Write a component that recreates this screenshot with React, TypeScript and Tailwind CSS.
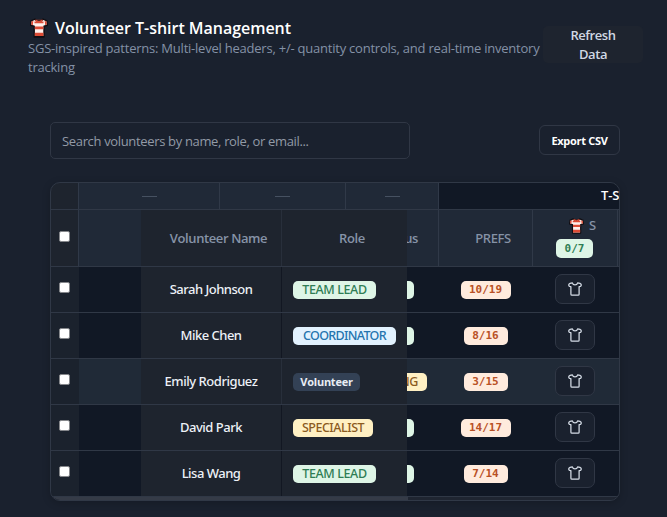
import React from 'react';

const SANS = "font-['Open_Sans','Noto_Sans',sans-serif]";
const MONO = "font-['DejaVu_Sans_Mono',monospace]";

function StripedShirt({ className }: { className: string }) {
  return (
    <svg viewBox="0 0 18 18" preserveAspectRatio="none" className={className}>
      <path d="M5 1 L1 2.6 L.6 6.5 L4.2 7.4 V17 H14 V7.4 L17.4 6.5 L17 2.6 L13 1 C11.5 3.6 6.5 3.6 5 1Z" fill="#fff1ed" stroke="#100d12" strokeWidth="1.4" strokeLinejoin="round" />
      <path d="M4.8 7.6h8.6v2.5H4.8z M4.8 13.3h8.6v3H4.8z M4.5 3.2h9v1.5h-9z" fill="#dc4b35" />
      <path d="M1.3 3.3l2-.8-.5 4-1.5-.4z M16.7 3.3l-2-.8.5 4 1.5-.4z M5 1.5C6.5 4.8 11.5 4.8 13 1.5" fill="#dc4b35" />
      <path d="M6.8 1.5C7.5 2.7 10.5 2.7 11.2 1.5" fill="#17151b" />
    </svg>
  );
}

function ShirtOutline() {
  return (
    <svg viewBox="0 0 14 14" className="h-[14px] w-[14px]" fill="none" stroke="#d5dce6" strokeWidth="1.25" strokeLinejoin="round" strokeLinecap="round">
      <path d="M4.4 .8 L2 1.3 Q.6 1.8 .7 3.2 Q1 4.9 2.9 4.6 V12.2 Q2.9 13.2 3.9 13.2 H10.1 Q11.1 13.2 11.1 12.2 V4.6 Q13 4.9 13.3 3.2 Q13.4 1.8 12 1.3 L9.6 .8 Q9.1 2.9 7 2.9 Q4.9 2.9 4.4 .8Z" />
    </svg>
  );
}

function Checkbox() {
  return <span className="block h-[11px] w-[11px] rounded-[2px] border border-[#85878b] bg-white" />;
}

const GREEN = 'bg-[#def5e6] text-[#2f7d54]';
const rows = [
  { name: 'Sarah Johnson', ns: 'tracking-[-0.5px]', role: 'TEAM LEAD', tone: `w-[83px] tracking-[-0.4px] ${GREEN}`, prefs: '10/19', pending: false },
  { name: 'Mike Chen', ns: 'tracking-[-0.5px]', role: 'COORDINATOR', tone: 'w-[103px] tracking-[-0.68px] bg-[#e2f2fe] text-[#2474ae]', prefs: '8/16', pending: false },
  { name: 'Emily Rodriguez', ns: 'tracking-[-0.46px]', role: 'Volunteer', tone: 'w-[67px] tracking-[-0.25px] bg-[#334155] text-[#e8edf4]', prefs: '3/15', pending: true },
  { name: 'David Park', ns: 'tracking-[-0.5px]', role: 'SPECIALIST', tone: 'w-[80px] tracking-[-0.48px] bg-[#fff0c3] text-[#8b5a1e]', prefs: '14/17', pending: false },
  { name: 'Lisa Wang', ns: 'tracking-[-0.5px]', role: 'TEAM LEAD', tone: `w-[83px] tracking-[-0.4px] ${GREEN}`, prefs: '7/14', pending: false },
];

function TopCell({ width }: { width: string }) {
  return (
    <div className={`flex shrink-0 items-center justify-center border-r border-[#303948] bg-[#202937] ${width}`}>
      <span className="h-px w-[15px] bg-[#465161]" />
    </div>
  );
}

export default function App() {
  return (
    <main className={`h-[517px] w-[667px] overflow-hidden bg-[#1a212e] text-white ${SANS}`}>
      <header className="flex h-[122px] pl-7 pt-[17px]">
        <div className="w-[515px] shrink-0">
          <h1 className="flex h-[21px] items-center text-[16px] font-semibold">
            <StripedShirt className="ml-[2px] mr-[7px] h-[20px] w-[18px]" />
            <span className="whitespace-nowrap tracking-[-0.03px]">Volunteer T-shirt Management</span>
          </h1>
          <p className="mt-px whitespace-nowrap text-[13px] leading-[19px] tracking-[-0.225px] text-[#8491a6]">
            SGS-inspired patterns: Multi-level headers, +/- quantity controls, and real-time inventory
            <br />
            tracking
          </p>
        </div>
        <button className="mt-[9px] h-[37px] w-[100px] rounded-[5px] bg-[#1e242f] text-[13px] font-semibold leading-[19px] tracking-[-0.45px] text-[#d0d8e4]">
          Refresh
          <br />
          Data
        </button>
      </header>

      <div className="ml-[50px] flex h-[60px] w-[570px] items-start justify-between">
        <input
          placeholder="Search volunteers by name, role, or email..."
          className="h-[37px] w-[360px] rounded-[5px] border border-[#303745] bg-[#1a212e] pl-[11px] text-[13px] tracking-[-0.34px] placeholder:text-[#929aa6]"
        />
        <button className="mt-[3px] h-[30px] w-[81px] whitespace-nowrap rounded-[6px] border border-[#303745] pt-[2px] text-[11px] font-bold tracking-[-0.3px]">Export CSV</button>
      </div>

      <section className="ml-[50px] h-[319px] w-[570px] overflow-hidden rounded-[10px] border border-[#303846] bg-[#1e242e] shadow-[0_2px_8px_rgba(0,0,0,0.2)]">
        <div className="flex h-[27px] border-b border-[#303846]">
          <div className="w-[28px] shrink-0 border-r border-[#303948]" />
          <TopCell width="w-[141px]" />
          <TopCell width="w-[126px]" />
          <TopCell width="w-[93px]" />
          <div className="flex-1 overflow-hidden whitespace-nowrap bg-[#111825] pl-[162px] text-[13px] font-semibold leading-[25px] tracking-[-0.2px]">T-Shirts</div>
        </div>
        <div className="flex h-[57px] border-b border-[#303846] text-[13px] font-semibold tracking-[-0.4px] text-[#8693a7]">
          <div className="flex w-[28px] shrink-0 items-center border-r border-[#303948] pb-[3px] pl-[8px]"><Checkbox /></div>
          <div className="w-[62px] shrink-0 bg-[#202937]" />
          <div className="flex w-[141px] shrink-0 items-center justify-center whitespace-nowrap border-r border-[#282f3b] pl-[15px] pt-[2px]">Volunteer Name</div>
          <div className="flex w-[125px] shrink-0 items-center justify-center pl-[15px] pt-[2px]">Role</div>
          <div className="flex w-[32px] shrink-0 items-center justify-end overflow-hidden border-r border-[#303948] bg-[#202937] pr-[20px] pt-[2px]">Status</div>
          <div className="flex w-[94px] shrink-0 items-center justify-center border-r border-[#303948] bg-[#202937] pl-[15px] pt-[2px] font-['Noto_Sans',sans-serif] text-[13px] font-medium">PREFS</div>
          <div className="w-[85px] shrink-0 border-r border-[#303948] bg-[#202937] pt-[7px]">
            <div className="flex h-[18px] items-center pl-[36px] font-['Noto_Sans',sans-serif] font-medium">
              <StripedShirt className="mr-[5px] h-[16px] w-[15px]" />S
            </div>
            <div className={`ml-[23px] mt-[4px] h-[19px] w-[37px] rounded-[5px] text-center text-[11px] font-bold leading-[20px] tracking-normal ${MONO} ${GREEN}`}>0/7</div>
          </div>
          <div className="flex-1 bg-[#202937]" />
        </div>
        {rows.map((row, i) => {
          const bg = row.pending ? 'bg-[#202a37]' : 'bg-[#111825]';
          return (
            <div key={row.name} className="flex h-[46px] border-b border-[#303846]">
              <div className="flex w-[28px] shrink-0 items-center bg-[#1b222d] pb-[5px] pl-[8px]"><Checkbox /></div>
              <div className={`w-[62px] shrink-0 ${bg}`} />
              <div className={`flex w-[141px] shrink-0 items-center justify-center whitespace-nowrap border-r pt-px font-['Noto_Sans',sans-serif] text-[13px] font-medium text-[#edf1f7] ${row.ns} ${row.pending ? 'border-[#282f3b]' : 'border-[#121722]'}`}>{row.name}</div>
              <div className="flex w-[125px] shrink-0 items-center pl-[11px]">
                <span className={`h-[18px] whitespace-nowrap rounded-[5px] text-center leading-[18px] ${row.role === 'Volunteer' ? 'text-[11px] font-bold' : "font-['Noto_Sans',sans-serif] text-[12.5px] font-medium"} ${row.tone}`}>{row.role}</span>
              </div>
              <div className={`flex w-[31px] shrink-0 items-center justify-end overflow-hidden ${row.pending ? 'pr-[11px]' : 'pr-[24px]'} ${bg}`}>
                <span className={`h-[18px] shrink-0 rounded-[5px] px-[9px] font-['Noto_Sans',sans-serif] text-[12.5px] font-medium leading-[18px] tracking-[-0.4px] ${row.pending ? 'bg-[#fff0c3] text-[#8b5a1e]' : GREEN}`}>{row.pending ? 'PENDING' : 'ACTIVE'}</span>
              </div>
              <div className={`flex w-[95px] shrink-0 items-center justify-center ${bg}`}>
                <span className={`h-[18px] rounded-[5px] bg-[#ffebdd] text-center text-[11px] font-bold leading-[18px] text-[#b95125] ${MONO} ${row.prefs.length === 5 ? 'w-[50px]' : 'w-[44px]'}`}>{row.prefs}</span>
              </div>
              <div className={`flex flex-1 items-center pb-px pl-[22px] ${bg}`}>
                <button aria-label={`Shirt ${i + 1}`} className="flex h-[30px] w-[40px] items-center justify-center rounded-[7px] border border-[#303745] bg-[#1a212e]"><ShirtOutline /></button>
              </div>
            </div>
          );
        })}
        <div className="h-[4px] bg-[#1f2531]"><div className="h-full w-[357px] bg-[#353b47]" /></div>
      </section>
    </main>
  );
}
